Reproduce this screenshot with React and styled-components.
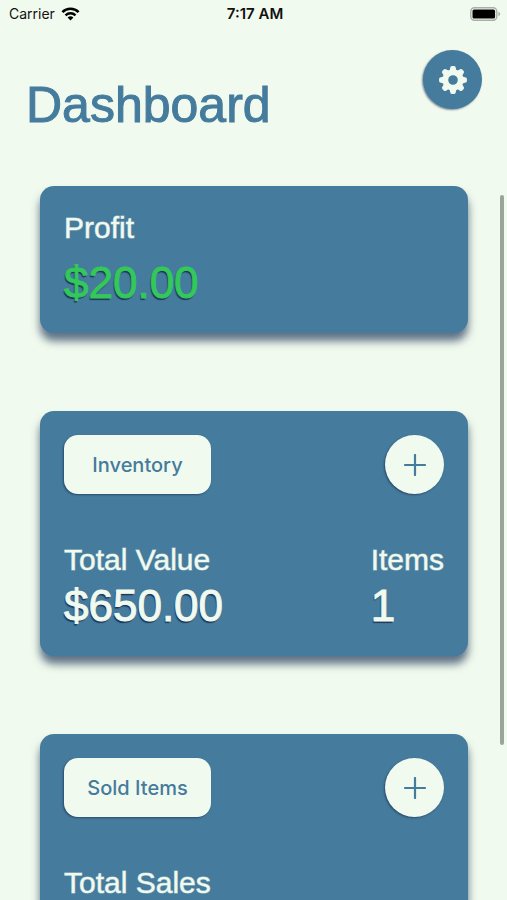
import styled, { createGlobalStyle } from 'styled-components'

const GlobalStyle = createGlobalStyle`
  * {
    box-sizing: border-box;
  }

  body {
    margin: 0;
    background: #f1faee;
    font-family: "Liberation Sans", Arial, sans-serif;
  }
`

const Screen = styled.div`
  display: flex;
  flex-direction: column;
  height: 100vh;
  overflow: hidden;
  background: #f1faee;
`

const StatusBar = styled.div`
  display: grid;
  grid-template-columns: 1fr auto 1fr;
  align-items: center;
  height: 27px;
  padding: 0 6px 0 9px;
  color: #111;
  font-family: Inter, sans-serif;
  font-size: 14px;
`

const Carrier = styled.div`
  display: flex;
  align-items: center;
  gap: 6px;
`

const Time = styled.time`
  font-size: 15px;
  font-weight: 600;
`

const Battery = styled.svg`
  justify-self: end;
`

const Header = styled.header`
  display: flex;
  justify-content: space-between;
  align-items: flex-start;
  padding: 23px 25px 0 26px;
`

const Title = styled.h1`
  margin: 26px 0 0;
  color: #457b9d;
  font-size: 50px;
  line-height: 58px;
  font-weight: 400;
  -webkit-text-stroke: 1px #457b9d;
`

const RoundButton = styled.button`
  display: flex;
  align-items: center;
  justify-content: center;
  width: 59px;
  height: 59px;
  padding: 0;
  border: 0;
  border-radius: 50%;
  background: ${({ $dark }) => ($dark ? '#457b9d' : '#f1faee')};
  color: ${({ $dark }) => ($dark ? '#f1faee' : '#457b9d')};
  box-shadow: -1px 1px 2px ${({ $dark }) => ($dark ? '#1d355790' : '#1d3557b0')};
  cursor: pointer;
`

const Main = styled.main`
  position: relative;
  flex: 1;
  min-height: 0;
  margin-top: 24px;
  overflow: hidden;
`

const Cards = styled.div`
  display: flex;
  flex-direction: column;
  gap: 78px;
  padding: 28px 39px 78px 40px;
`

const ScrollThumb = styled.div`
  position: absolute;
  top: 37px;
  right: 3px;
  width: 4px;
  height: 550px;
  border-radius: 2px;
  background: #9aa697;
`

const Card = styled.section`
  display: flex;
  flex-direction: column;
  gap: 48px;
  flex-shrink: 0;
  min-height: ${({ $tall }) => ($tall ? '245px' : '147px')};
  padding: 24px;
  border-radius: 14px;
  background: #457b9d;
  box-shadow: 0 8px 8px #1d3557b0;
`

const Row = styled.div`
  display: flex;
  justify-content: space-between;
`

const PillButton = styled.button`
  width: 147px;
  height: 59px;
  padding: 0;
  border: 0;
  border-radius: 14px;
  background: #f1faee;
  color: #457b9d;
  box-shadow: -1px 1px 2px #1d3557b0;
  font-family: Inter, sans-serif;
  font-size: 20px;
  font-weight: 500;
  cursor: pointer;
`

const Stat = styled.div`
  display: flex;
  flex-direction: column;
  gap: ${({ $loose }) => ($loose ? '11px' : '2px')};
`

const Label = styled.h2`
  margin: 0;
  color: #f1faee;
  font-size: 30px;
  line-height: 36px;
  font-weight: 400;
  -webkit-text-stroke: 1px #f1faee90;
`

const Amount = styled.p`
  margin: 0;
  color: ${({ $positive }) => ($positive ? '#34c759' : '#f1faee')};
  font-size: 44px;
  line-height: 52px;
  -webkit-text-stroke: 1px ${({ $positive }) => ($positive ? '#34c759' : '#f1faee')};
  text-shadow: -1px 2px 1px #1d3557;
`

const TEETH = [0, 45, 90, 135, 180, 225, 270, 315]

function GearIcon() {
  return (
    <svg width="28" height="28" viewBox="-14 -14 28 28" aria-hidden="true">
      <circle r="7.6" fill="none" stroke="currentColor" strokeWidth="5.6" />
      {TEETH.map((angle) => (
        <path
          key={angle}
          d="M-4.2 -9 Q-3 -10 -2.8 -12 Q-2.6 -13.9 -1.2 -13.9 H1.2 Q2.6 -13.9 2.8 -12 Q3 -10 4.2 -9 Z"
          transform={`rotate(${angle})`}
          fill="currentColor"
        />
      ))}
    </svg>
  )
}

function PlusIcon() {
  return (
    <svg width="22" height="22" viewBox="0 0 22 22" aria-hidden="true">
      <path d="M11 1v20M1 11h20" stroke="currentColor" strokeWidth="2.2" strokeLinecap="round" />
    </svg>
  )
}

function WifiIcon() {
  return (
    <svg width="19" height="14" viewBox="0 0 19 14" aria-hidden="true">
      <path d="M1.4 5.1a11.6 11.6 0 0 1 16.2 0" fill="none" stroke="#000" strokeWidth="2.6" />
      <path d="M4.5 8.3a7.2 7.2 0 0 1 10 0" fill="none" stroke="#000" strokeWidth="2.4" />
      <path d="M9.5 13.6L6.6 10.6a4.2 4.2 0 0 1 5.8 0Z" fill="#000" />
    </svg>
  )
}

function BatteryIcon() {
  return (
    <Battery width="31" height="14" viewBox="0 0 31 14" role="img" aria-label="Battery full">
      <rect x="0.8" y="0.8" width="26" height="12.4" rx="3.6" fill="none" stroke="#a9afa7" strokeWidth="1.4" />
      <rect x="2.5" y="2.5" width="22.6" height="9" rx="1.6" fill="#000" />
      <path d="M28.4 4.8v4.4q1.8-.8 1.8-2.2t-1.8-2.2Z" fill="#a9afa7" />
    </Battery>
  )
}

export default function App() {
  return (
    <Screen>
      <GlobalStyle />
      <StatusBar>
        <Carrier>
          Carrier
          <WifiIcon />
        </Carrier>
        <Time>7:17 AM</Time>
        <BatteryIcon />
      </StatusBar>
      <Header>
        <Title>Dashboard</Title>
        <RoundButton $dark aria-label="Settings">
          <GearIcon />
        </RoundButton>
      </Header>
      <Main>
        <Cards>
          <Card>
            <Stat $loose>
              <Label>Profit</Label>
              <Amount $positive>$20.00</Amount>
            </Stat>
          </Card>
          <Card $tall>
            <Row>
              <PillButton>Inventory</PillButton>
              <RoundButton aria-label="Add inventory item">
                <PlusIcon />
              </RoundButton>
            </Row>
            <Row>
              <Stat>
                <Label>Total Value</Label>
                <Amount>$650.00</Amount>
              </Stat>
              <Stat>
                <Label>Items</Label>
                <Amount>1</Amount>
              </Stat>
            </Row>
          </Card>
          <Card $tall>
            <Row>
              <PillButton>Sold Items</PillButton>
              <RoundButton aria-label="Add sold item">
                <PlusIcon />
              </RoundButton>
            </Row>
            <Stat>
              <Label>Total Sales</Label>
            </Stat>
          </Card>
        </Cards>
        <ScrollThumb />
      </Main>
    </Screen>
  )
}
